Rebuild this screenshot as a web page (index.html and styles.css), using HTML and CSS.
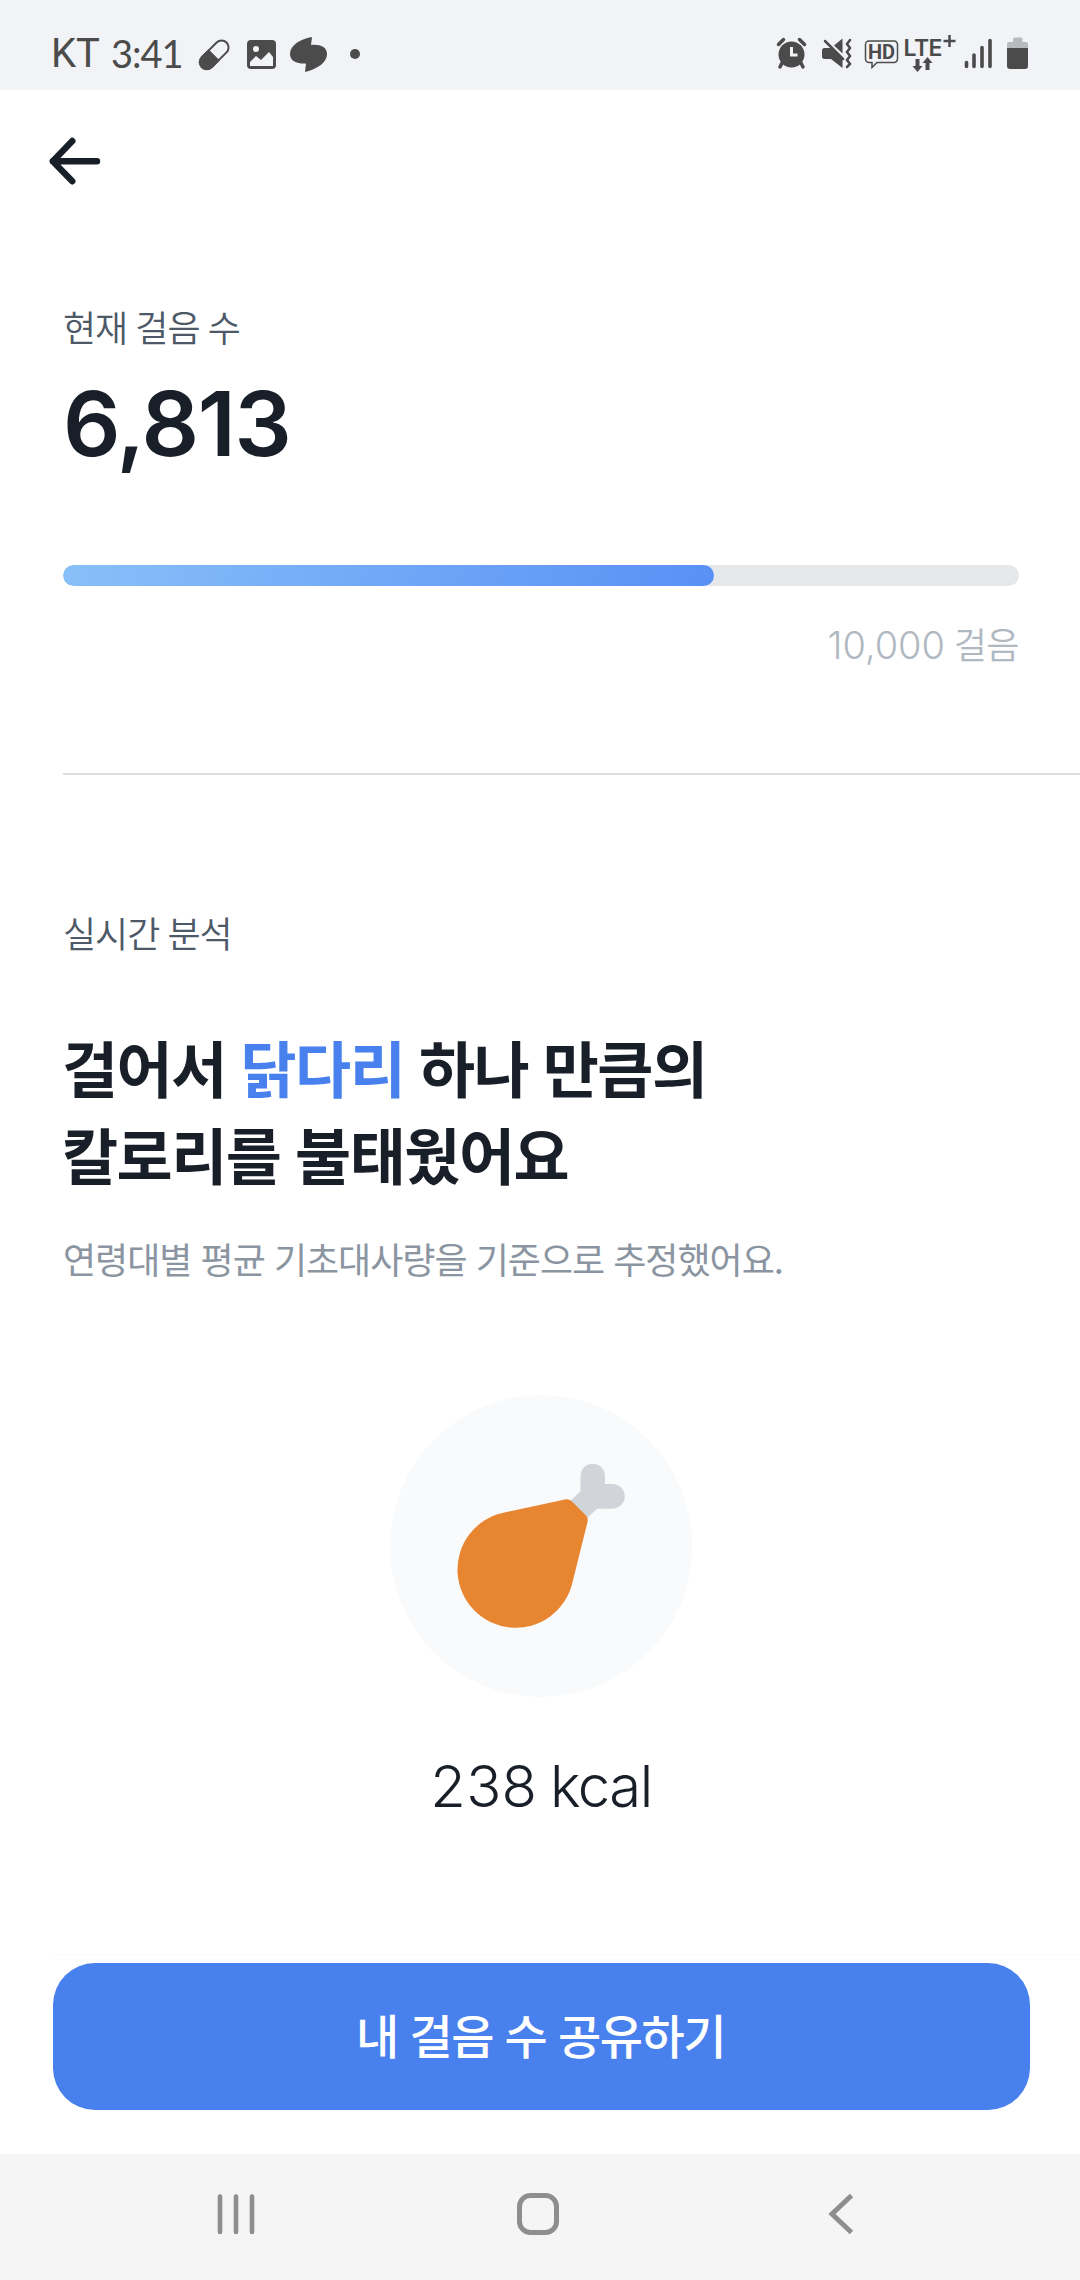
FILE: index.html
```html
<!DOCTYPE html>
<html lang="ko">
<head>
<meta charset="utf-8">
<title>만보기</title>
<link rel="stylesheet" href="styles.css">
</head>
<body>
<div class="screen">
  <header class="status">
    <span class="carrier">KT</span>
    <span class="clock">3:41</span>
    <svg class="status-left" viewBox="190 0 200 90" width="200" height="90">
      <g transform="rotate(-45 214.500 54.500)">
        <rect x="197.500" y="47.500" width="34" height="14" rx="7" fill="none" stroke="#4a4b4a" stroke-width="2"/>
        <path d="M214 46.500h-10.500a8 8 0 0 0 0 16h10.500z" fill="#4a4b4a"/>
      </g>
      <path fill="#4a4b4a" fill-rule="evenodd" d="M251 40h21a4 4 0 0 1 4 4v21a4 4 0 0 1-4 4h-21a4 4 0 0 1-4-4v-21a4 4 0 0 1 4-4zM256 46a3 3 0 1 0 0 6a3 3 0 1 0 0-6zM250 62v4h23v-9l-4-5-8 8-5-4z"/>
      <path fill="#4a4b4a" d="M312 37C299 39 290 46 290 54C290 61 297 64 306 63.500L305 72C318 69 327 62 327 54C327 47 320 44 311 45z"/>
      <circle cx="355" cy="54" r="5" fill="#4a4b4a"/>
    </svg>
    <svg class="status-right" viewBox="770 0 270 90" width="270" height="90" fill="#4a4b4a" stroke="none">
      <circle cx="791.500" cy="54.500" r="13"/>
      <path d="M778.500 44.500l5-5M804.500 44.500l-5-5M782 63l-2 4M801 63l2 4" fill="none" stroke="#4a4b4a" stroke-width="3.500" stroke-linecap="round"/>
      <path d="M791.500 47v8h6" fill="none" stroke="#f2f3f6" stroke-width="3"/>
      <path d="M824.500 48h6L842.500 59.500V68L831 59h-6.500q-2.500 0-2.500-2.500v-6q0-2.500 2.500-2.500zM834 45.500l8.500-7v15z"/>
      <path d="M825 41l18 18" stroke="#4a4b4a" stroke-width="2.500" stroke-linecap="round"/>
      <path d="M850 40l-3 4 3 4-3 4 3 4-3 4 3 4-3 3" fill="none" stroke="#4a4b4a" stroke-width="2.500" stroke-linecap="round"/>
      <path d="M869 41h25a3.500 3.500 0 0 1 3.500 3.500v14.500a3.500 3.500 0 0 1-3.500 3.500h-17l-5 5v-5h-3a3.500 3.500 0 0 1-3.500-3.500v-14.500a3.500 3.500 0 0 1 3.500-3.500z" fill="none" stroke="#4a4b4a" stroke-width="1.500"/>
      <text x="868" y="59.300" class="hd" textLength="27">HD</text>
      <text x="903.500" y="55.800" class="lte" textLength="39">LTE</text>
      <path d="M949.500 35v12M943.500 41h12" stroke="#4a4b4a" stroke-width="2.500"/>
      <path d="M915.500 59h4v7h3l-5 6-5-6h3zM925.500 70v-7h-3l5-6 5 6h-3v7z"/>
      <path d="M966.500 62.500v4M974 55v11.500M982 47.500v19M990 40.500v26" stroke="#4a4b4a" stroke-width="3.600" stroke-linecap="round"/>
      <path fill="#b9babb" d="M1007 48v-4q0-2 2-2h4v-3q0-1.500 1.500-1.500h6.500q1.500 0 1.500 1.500v3h3.500q2 0 2 2v4z"/>
      <path d="M1007 48h21v18q0 3-3 3h-15q-3 0-3-3z"/>
    </svg>
  </header>
  <nav class="topbar">
    <svg viewBox="0 0 60 60" width="60" height="60" fill="none" stroke="#191f28" stroke-width="6.400" stroke-linecap="round" stroke-linejoin="round"><path d="M28.300 9L8.800 29.300l19.500 20M8.800 29.300H53"/></svg>
  </nav>
  <main>
    <section class="steps">
      <h2 class="label">현재 걸음 수</h2>
      <p class="count">6,813</p>
      <div class="track"><div class="fill" style="width:68.130%"></div></div>
      <p class="goal">10,000 <span class="unit">걸음</span></p>
    </section>
    <hr class="divider">
    <section class="analysis">
      <h2 class="label">실시간 분석</h2>
      <p class="headline">걸어서 <em>닭다리</em> 하나 만큼의<br>칼로리를 불태웠어요</p>
      <p class="note">연령대별 평균 기초대사량을 기준으로 추정했어요.</p>
      <div class="food">
        <svg viewBox="370 1380 340 340" width="340" height="340">
          <circle cx="541.200" cy="1546" r="151" fill="#f9fafb"/>
          <path fill="#d1d4d9" d="M570.500 1501L580.500 1491V1476a12.200 12.200 0 0 1 24.400 0V1484h7.500a12.200 12.200 0 0 1 0 24.700H597L587 1518z"/>
          <path fill="#e78531" d="M565 1499.500Q569 1498.500 572 1501.500L586 1515.500Q588.500 1518 587.500 1522L572.300 1583A58.200 58.200 0 1 1 503.300 1512.700z"/>
        </svg>
      </div>
      <p class="kcal">238 <span class="kcal-unit">kcal</span></p>
    </section>
  </main>
  <footer class="cta"><button class="share">내 걸음 수 공유하기</button></footer>
  <div class="sysnav">
    <svg viewBox="0 2154 1080 126" width="1080" height="126" fill="none" stroke="#8e8e8e" stroke-width="5" stroke-linecap="round">
      <path stroke-width="4.600" d="M220 2196.500v35.500M236 2196.500v35.500M252 2196.500v35.500"/>
      <rect x="519.500" y="2195.500" width="37" height="37" rx="11"/>
      <path stroke-linecap="butt" d="M851.500 2195.500L832 2214l19.500 18.500"/>
    </svg>
  </div>
</div>
</body>
</html>
```
FILE: styles.css
```css
* { box-sizing: border-box; margin: 0; padding: 0; }
body { width: 1080px; background: #fff; font-family: Inter, "Noto Sans CJK KR", sans-serif; color: #191f28; }
svg { display: block; }
.screen { display: flex; flex-direction: column; height: 2280px; overflow: hidden; }
.status { display: flex; height: 90px; background: #f2f3f6; color: #4a4b4a; padding: 0 40px 0 51px; white-space: nowrap; }
.carrier { width: 60px; font: 40px/108px Roboto, sans-serif; }
.clock { width: 79px; font: 38px/107px Lato, sans-serif; letter-spacing: -1px; }
.status-right { margin-left: auto; }
.hd { font: 700 20px Roboto, sans-serif; }
.lte { font: 600 23px Inter, sans-serif; }
.topbar { height: 142px; padding: 42px 0 0 44px; }
.steps { padding: 66px 61px 0 63px; }
.label { font-family: "Noto Sans CJK KR", sans-serif; font-weight: 350; font-size: 36px; line-height: 56px; letter-spacing: -1px; word-spacing: -1px; color: #4e5968; }
.count { margin-top: 15px; font-size: 90px; font-weight: 600; line-height: 110px; letter-spacing: -1.3px; }
.track { margin-top: 86px; height: 21px; border-radius: 11px; background: #e5e8eb; overflow: hidden; }
.fill { height: 100%; border-radius: 11px; background: linear-gradient(100deg, #88c0f9, #5990f5); }
.goal { margin-top: 33px; text-align: right; font-size: 38px; line-height: 52px; font-weight: 350; letter-spacing: 0; word-spacing: -2px; color: #b0b8c1; }
.unit { font-size: 36px; letter-spacing: -.5px; }
.divider { margin: 101px 0 0 63px; border: 0; height: 2px; background: #dedfe1; }
.analysis { padding: 129px 61px 0 63px; }
.headline { margin-top: 63px; margin-left: -1px; font-family: "Noto Sans CJK KR", sans-serif; font-weight: 700; font-size: 61px; line-height: 87px; letter-spacing: -1.5px; word-spacing: -1px; white-space: nowrap; }
.headline em { font-style: normal; color: #4880ee; }
.note { margin-top: 33px; font-family: "Noto Sans CJK KR", sans-serif; font-size: 36px; line-height: 56px; letter-spacing: -1px; color: #8b95a1; white-space: nowrap; }
.food { margin: 94px 0 0 307px; }
.kcal { margin-top: 31px; text-align: center; font-size: 58px; line-height: 70px; font-weight: 350; letter-spacing: .3px; word-spacing: -4px; }
.kcal-unit { letter-spacing: -1.5px; }
.cta { margin: auto 0 0 53px; padding: 8px 50px 44px 0; border-top: 1px solid #fafafa; }
.share { display: block; width: 977px; height: 147px; padding: 0 8px 5px 6px; border: 0; border-radius: 42px; background: #4880ee; color: #fff; font: 500 47px/142px "Noto Sans CJK KR", sans-serif; letter-spacing: -1.5px; }
.sysnav { height: 126px; background: #f5f5f5; }
```
